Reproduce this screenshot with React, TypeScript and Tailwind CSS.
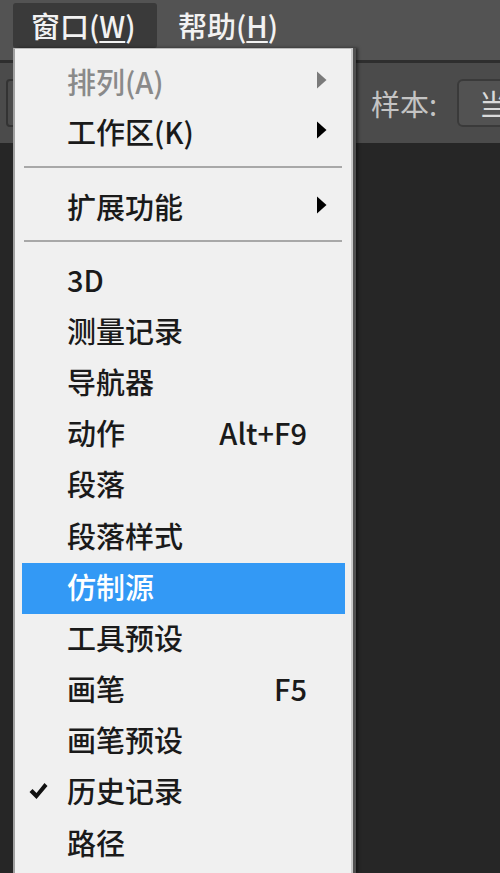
import React from "react";

const font = { fontFamily: '"Noto Sans CJK SC", "Noto Sans", sans-serif' };

function Arrow({ grey }: { grey?: boolean }) {
  return (
    <svg width="11" height="18" viewBox="0 0 11 18" className="absolute right-[24px] top-[calc(50%-4px)] -translate-y-1/2">
      <path d="M1 0.5 L10.5 9 L1 17.5 Z" fill={grey ? "#7a7a7a" : "#000"} />
    </svg>
  );
}

function Item({
  label,
  h = "h-[51.2px]",
  grey,
  sub,
  shortcut,
  active,
  checked,
}: {
  label: string;
  h?: string;
  grey?: boolean;
  sub?: boolean;
  shortcut?: string;
  active?: boolean;
  checked?: boolean;
}) {
  return (
    <div className={`relative ${h} flex items-center`}>
      {active && <div className="absolute left-[7px] right-[6px] top-0 bottom-0 bg-[#3399f5]" />}
      {checked && (
        <svg width="19" height="18" viewBox="0 0 19 18" className="absolute left-[14px] top-[calc(50%-2px)] -translate-y-1/2">
          <path d="M0.5 10 L3.5 7 L7.5 11 L15.5 1 L18.5 4 L7.5 17 Z" fill="#111" />
        </svg>
      )}
      <span
        className={`relative pl-[52px] pb-[5px] text-[29px] leading-none font-medium whitespace-nowrap ${
          active ? "text-white" : grey ? "text-[#8a8a8a]" : "text-[#1a1a1a]"
        }`}
      >
        {label}
      </span>
      {shortcut && (
        <span className="relative ml-auto pr-[44px] pb-[5px] text-[29px] leading-none font-medium text-[#1a1a1a] whitespace-nowrap">
          {shortcut}
        </span>
      )}
      {sub && <Arrow grey={grey} />}
    </div>
  );
}

function Sep({ mt, mb }: { mt: string; mb: string }) {
  return <div className={`${mt} ${mb} mx-[9px] h-[2px] bg-[#a8a8a8]`} />;
}

export default function App() {
  return (
    <div className="relative w-[500px] h-[873px] overflow-hidden bg-[#262626]" style={font}>
      {/* top menu bar */}
      <div className="h-[60px] bg-[#535353] flex items-start">
        <div className="ml-[13px] mt-[3px] w-[144px] h-[45px] bg-[#3a3a3a] rounded-[3px] flex items-center pl-[18px] text-[29px] leading-none font-medium text-[#f2f2f2] whitespace-nowrap">
          窗口(<span className="underline underline-offset-[3px]">W</span>)
        </div>
        <div className="ml-[21px] mt-[3px] h-[45px] flex items-center text-[29px] leading-none font-medium text-[#f2f2f2] whitespace-nowrap">
          帮助(<span className="underline underline-offset-[3px]">H</span>)
        </div>
      </div>
      <div className="h-[3px] bg-[#2e2e2e]" />
      {/* options bar */}
      <div className="h-[80px] bg-[#4b4b4b] flex items-center">
        <div className="ml-[6px] w-[100px] h-[48px] border-2 border-[#333] rounded-[4px]" />
        <div className="ml-auto flex items-center">
          <span className="text-[29px] leading-none text-[#c4c4c4] mr-[20px] whitespace-nowrap">样本:</span>
          <div className="w-[60px] h-[48px] bg-[#525252] border-2 border-[#3a3a3a] rounded-l-[6px] flex items-center pl-[20px] text-[29px] leading-none text-[#dadada] -mr-[17px] whitespace-nowrap overflow-hidden">
            当前
          </div>
        </div>
      </div>

      {/* dropdown menu */}
      <div className="absolute left-[13px] top-[48px] w-[340px] bottom-0 bg-[#f0f0f0] border-l-2 border-[#a0a0a0] border-r-2 border-r-[#c9c9c9] border-t border-t-[#bbbbbb] shadow-[3px_0_0_#505050,5px_0_3px_rgba(0,0,0,0.5)]">
        <div className="pt-[10px]">
          <Item label="排列(A)" h="h-[50px]" grey sub />
          <Item label="工作区(K)" h="h-[50px]" sub />
          <Sep mt="mt-[7px]" mb="mb-[16px]" />
          <Item label="扩展功能" h="h-[50px]" sub />
          <Sep mt="mt-[6px]" mb="mb-[14px]" />
          <Item label="3D" />
          <Item label="测量记录" />
          <Item label="导航器" />
          <Item label="动作" shortcut="Alt+F9" />
          <Item label="段落" />
          <Item label="段落样式" />
          <Item label="仿制源" active />
          <Item label="工具预设" />
          <Item label="画笔" shortcut="F5" />
          <Item label="画笔预设" />
          <Item label="历史记录" checked />
          <Item label="路径" />
        </div>
      </div>
    </div>
  );
}
